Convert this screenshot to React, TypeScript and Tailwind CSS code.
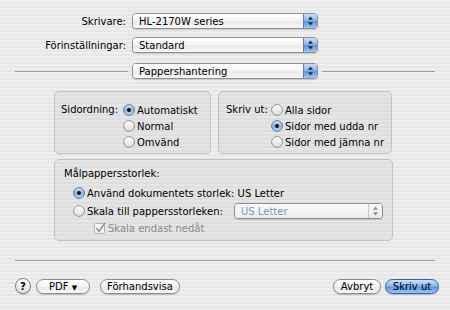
import React from "react";

const STRIPES =
  "bg-[repeating-linear-gradient(to_bottom,#eeeeee_0px,#eeeeee_2px,#e7e7e7_2px,#e7e7e7_4px)]";

function Arrows({ dim }: { dim?: boolean }) {
  const c = dim ? "#8a8a8a" : "#1c2a40";
  return (
    <svg width="7" height="10" viewBox="0 0 7 10">
      <path d="M3.5 0.5 L6 3.8 L1 3.8 Z" fill={c} />
      <path d="M3.5 9.5 L6 6.2 L1 6.2 Z" fill={c} />
    </svg>
  );
}

function Popup({ label, width, disabled }: { label: string; width: string; disabled?: boolean }) {
  return (
    <div className={`flex h-[16px] ${width} rounded-[4px] border border-[#8f8f8f] overflow-hidden shadow-[0_1px_1px_rgba(0,0,0,0.15)]`}>
      <div
        className={`flex flex-1 items-center pl-[6px] ${
          disabled
            ? "bg-[linear-gradient(to_bottom,#fafafa,#ececec)] text-[#7f95b8]"
            : "bg-[linear-gradient(to_bottom,#ffffff_0%,#f4f4f4_50%,#e9e9e9_51%,#f7f7f7_100%)] text-black"
        }`}
      >
        {label}
      </div>
      {disabled ? (
        <div className="flex w-[14px] items-center justify-center border-l border-[#c9c9c9] bg-[linear-gradient(to_bottom,#fafafa,#e8e8e8)]">
          <Arrows dim />
        </div>
      ) : (
        <div className="flex w-[14px] items-center justify-center border-l border-[#5b7fb0] bg-[linear-gradient(to_bottom,#c8def7_0%,#8db8ea_45%,#5f97dd_55%,#9cc7f3_100%)]">
          <Arrows />
        </div>
      )}
    </div>
  );
}

function Radio({ on }: { on?: boolean }) {
  return (
    <svg width="12" height="12" viewBox="0 0 12 12" className="shrink-0">
      <defs>
        <linearGradient id="rOff" x1="0" y1="0" x2="0" y2="1">
          <stop offset="0" stopColor="#ffffff" />
          <stop offset="1" stopColor="#dcdcdc" />
        </linearGradient>
        <linearGradient id="rOn" x1="0" y1="0" x2="0" y2="1">
          <stop offset="0" stopColor="#d3e4f8" />
          <stop offset="0.5" stopColor="#8fb6e6" />
          <stop offset="1" stopColor="#b9d6f6" />
        </linearGradient>
      </defs>
      <circle cx="6" cy="6" r="5.4" fill={on ? "url(#rOn)" : "url(#rOff)"} stroke={on ? "#4d6f9c" : "#8a8a8a"} strokeWidth="0.9" />
      {on && <circle cx="6" cy="6" r="2" fill="#111" />}
    </svg>
  );
}

function Check() {
  return (
    <svg width="12" height="12" viewBox="0 0 12 12" className="shrink-0">
      <rect x="0.5" y="1.5" width="10" height="10" rx="1.5" fill="#f4f4f4" stroke="#b4b4b4" />
      <path d="M2.5 6 L5 9.5 L11 0.8" fill="none" stroke="#8c8c8c" strokeWidth="1.4" />
    </svg>
  );
}

function RadioRow({ on, label }: { on?: boolean; label: string }) {
  return (
    <div className="flex h-[16px] items-center gap-[2px]">
      <Radio on={on} />
      <span>{label}</span>
    </div>
  );
}

function Pill({ label, width, primary }: { label: React.ReactNode; width: string; primary?: boolean }) {
  return (
    <div
      className={`flex h-[15px] ${width} items-center justify-center rounded-full border ${
        primary
          ? "border-[#3d5f95] bg-[linear-gradient(to_bottom,#cfe3fa_0%,#8ab7ec_45%,#5a95df_55%,#9ccaf5_100%)]"
          : "border-[#8c8c8c] bg-[linear-gradient(to_bottom,#ffffff_0%,#f3f3f3_50%,#e6e6e6_51%,#f8f8f8_100%)]"
      } shadow-[0_1px_1px_rgba(0,0,0,0.2)]`}
    >
      {label}
    </div>
  );
}

export default function App() {
  return (
    <div className={`h-[310px] w-[450px] overflow-hidden ${STRIPES} font-['DejaVu_Sans',sans-serif] text-[10px] text-black`}>
      {/* Printer / presets */}
      <div className="flex flex-col pt-[13px]">
        <div className="flex items-center">
          <div className="w-[126px] text-right">Skrivare:</div>
          <div className="ml-[6px]">
            <Popup label="HL-2170W series" width="w-[186px]" />
          </div>
        </div>
        <div className="mt-[8px] flex items-center">
          <div className="w-[126px] text-right">Förinställningar:</div>
          <div className="ml-[6px]">
            <Popup label="Standard" width="w-[186px]" />
          </div>
        </div>
        <div className="mt-[10px] flex items-center px-[15px]">
          <div className="h-px flex-1 bg-[#9c9c9c]" />
          <div className="mx-[4px]">
            <Popup label="Pappershantering" width="w-[186px]" />
          </div>
          <div className="h-px flex-1 bg-[#9c9c9c]" />
        </div>
      </div>

      {/* Panel */}
      <div className="mt-[12px] pl-[54px]">
        <div className="flex gap-[7px]">
          <div className="flex h-[63px] w-[157px] rounded-[5px] border border-[#c2c2c2] bg-[rgba(0,0,0,0.035)] pl-[6px] pt-[10px]">
            <div className="h-[16px] w-[62px] leading-[16px]">Sidordning:</div>
            <div className="flex flex-col">
              <RadioRow on label="Automatiskt" />
              <RadioRow label="Normal" />
              <RadioRow label="Omvänd" />
            </div>
          </div>
          <div className="flex h-[63px] w-[174px] rounded-[5px] border border-[#c2c2c2] bg-[rgba(0,0,0,0.035)] pl-[7px] pt-[10px]">
            <div className="h-[16px] w-[45px] leading-[16px]">Skriv ut:</div>
            <div className="flex flex-col">
              <RadioRow label="Alla sidor" />
              <RadioRow on label="Sidor med udda nr" />
              <RadioRow label="Sidor med jämna nr" />
            </div>
          </div>
        </div>

        <div className="mt-[5px] flex h-[82px] w-[339px] flex-col rounded-[5px] border border-[#c2c2c2] bg-[rgba(0,0,0,0.035)] pl-[9px] pt-[6px]">
          <div className="h-[16px] leading-[16px]">Målpappersstorlek:</div>
          <div className="mt-[2px] flex flex-col pl-[9px]">
            <div className="flex h-[18px] items-center gap-[2px]">
              <Radio on />
              <span>Använd dokumentets storlek: US Letter</span>
            </div>
            <div className="flex h-[18px] items-center">
              <Radio />
              <span className="ml-[2px] w-[147px]">Skala till pappersstorleken:</span>
              <Popup label="US Letter" width="w-[149px]" disabled />
            </div>
            <div className="flex h-[16px] items-center gap-[2px] pl-[21px] text-[#8a8a8a]">
              <Check />
              <span>Skala endast nedåt</span>
            </div>
          </div>
        </div>
      </div>

      {/* Bottom separator */}
      <div className="mt-[19px] px-[15px]">
        <div className="h-px bg-[#9c9c9c]" />
      </div>

      {/* Buttons */}
      <div className="mt-[17px] flex items-center pl-[15px] pr-[11px]">
        <div className="flex h-[16px] w-[16px] items-center justify-center rounded-full border border-[#7d7d7d] bg-[linear-gradient(to_bottom,#ffffff,#dedede)] text-[10px] font-bold shadow-[0_1px_1px_rgba(0,0,0,0.2)]">
          ?
        </div>
        <div className="ml-[5px]">
          <Pill width="w-[54px]" label={<span>PDF <span className="text-[7px]">▼</span></span>} />
        </div>
        <div className="ml-[10px]">
          <Pill width="w-[80px]" label="Förhandsvisa" />
        </div>
        <div className="flex-1" />
        <Pill width="w-[48px]" label="Avbryt" />
        <div className="ml-[4px]">
          <Pill width="w-[54px]" label="Skriv ut" primary />
        </div>
      </div>
    </div>
  );
}
